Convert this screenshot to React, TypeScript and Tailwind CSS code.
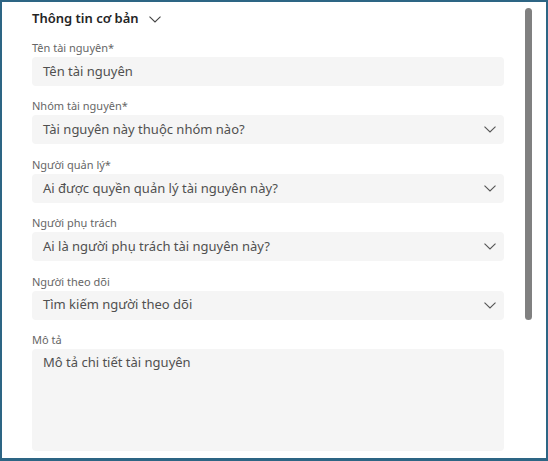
import React from "react";

function Chevron({ className = "" }: { className?: string }) {
  return (
    <svg className={className} width="12" height="7" viewBox="0 0 12 7" fill="none">
      <path d="M0.5 0.6 L6 6 L11.5 0.6" stroke="currentColor" strokeWidth="1.1" />
    </svg>
  );
}

function Field({ label, placeholder, select }: { label: string; placeholder: string; select?: boolean }) {
  return (
    <div className="mb-[12.4px]">
      <div className="h-[16px] leading-[16px] text-[11px] text-[#666666]">{label}</div>
      <div className="mt-[1px] h-[29px] w-[472px] rounded-[4px] bg-[#f5f5f5] flex items-center pl-[11px] pr-[8px]">
        <span className="flex-1 text-[13px] text-[#505050]">{placeholder}</span>
        {select && <Chevron className="text-[#555]" />}
      </div>
    </div>
  );
}

export default function App() {
  return (
    <div
      className="w-[548px] h-[461px] border-2 border-b-[3px] border-[#2d6584] bg-white flex overflow-hidden"
      style={{ fontFamily: '"Noto Sans", "Open Sans", sans-serif' }}
    >
      <div className="pl-[30px] pt-[7px] w-[502px] shrink-0">
        <div className="flex items-center h-[20px] mb-[11px]">
          <span className="text-[13px] font-semibold text-[#242424]">Thông tin cơ bản</span>
          <Chevron className="ml-[10px] text-[#444]" />
        </div>
        <Field label="Tên tài nguyên*" placeholder="Tên tài nguyên" />
        <Field label="Nhóm tài nguyên*" placeholder="Tài nguyên này thuộc nhóm nào?" select />
        <Field label="Người quản lý*" placeholder="Ai được quyền quản lý tài nguyên này?" select />
        <Field label="Người phụ trách" placeholder="Ai là người phụ trách tài nguyên này?" select />
        <Field label="Người theo dõi" placeholder="Tìm kiếm người theo dõi" select />
        <div>
          <div className="h-[16px] leading-[16px] text-[11px] text-[#666666]">Mô tả</div>
          <div className="mt-[1px] h-[102px] w-[472px] rounded-[4px] bg-[#f5f5f5] pl-[11px] pt-[4px]">
            <div className="text-[13px] leading-[18px] text-[#505050]">Mô tả chi tiết tài nguyên</div>
          </div>
        </div>
      </div>
      <div className="ml-[21px] mt-[6px] w-[7px] h-[312px] rounded-full bg-[#808080] shrink-0" />
    </div>
  );
}
